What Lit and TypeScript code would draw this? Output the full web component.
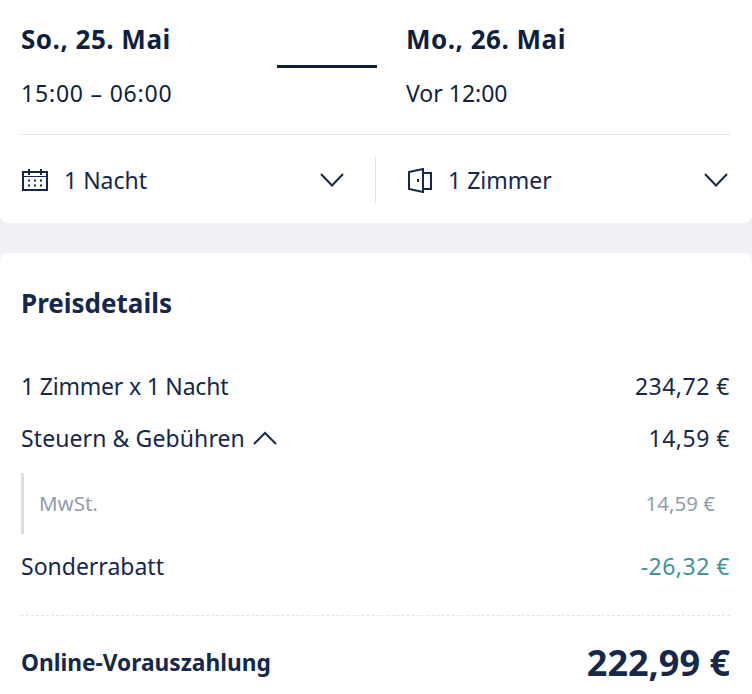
import { LitElement, html, css } from "lit";
import { customElement } from "lit/decorators.js";

@customElement("app-root")
export class AppRoot extends LitElement {
  static styles = css`
    :host { display: block; width: 752px; height: 694px; overflow: hidden; background: #eff1f5; font-family: "Noto Sans", sans-serif; color: #15284b; }
    .top { background: #fff; height: 223px; border-radius: 0 0 8px 8px; padding: 0 22px 0 21px; box-sizing: border-box; display: flex; flex-direction: column; }
    .dates { display: grid; grid-template-columns: 256px 100px 1fr; column-gap: 0; height: 135px; border-bottom: 1px solid #e2e4e8; color: #0e1f3f; }
    .col3 { padding-left: 29px; }
    .date { font-size: 26px; font-weight: 700; line-height: 34px; margin-top: 22px; letter-spacing: 0.5px; }
    .time { font-size: 23px; line-height: 32px; margin-top: 21px; letter-spacing: 0.8px; }
    .v12 { letter-spacing: 0; }
    .line { height: 3px; background: #0e1f3f; width: 100px; margin-top: 65px; }
    .opts { display: flex; align-items: center; height: 88px; padding-top: 2px; box-sizing: border-box; }
    .opt { display: flex; align-items: center; font-size: 23px; }
    .opt.a { width: 323px; box-sizing: border-box; }
    .opt.b { flex: 1; padding-right: 2px; }
    .opt .sp { flex: 1; }
    .ic1 { margin: 0 16px 0 1px; }
    .ic2 { margin: 0 16px 0 0; }
    .sep { width: 1px; height: 46px; background: #e2e4e8; margin: 0 32px 0 31px; }
    .card { margin-top: 30px; background: #fff; height: 441px; border-radius: 8px 8px 0 0; padding: 0 22px 0 21px; box-sizing: border-box; }
    h2 { margin: 0; font-size: 26px; font-weight: 700; line-height: 34px; padding-top: 33px; }
    .row { display: flex; justify-content: space-between; align-items: center; font-size: 23px; line-height: 32px; }
    .amt { letter-spacing: 0.5px; }
    .r1 { margin-top: 50px; }
    .tight { letter-spacing: -0.2px; }
    .wide { letter-spacing: 0.1px; }
    .r2 { margin-top: 20px; }
    .tax { margin-top: 19px; height: 61px; border-left: 3px solid #d9dde6; padding: 0 15px 2px 15px; box-sizing: border-box; display: flex; justify-content: space-between; align-items: center; font-size: 20.5px; color: #939cae; }
    .r3 { margin-top: 16px; }
    .teal { color: #3d9599; }
    .lab { display: flex; align-items: center; gap: 8px; }
    .total { margin-top: 33px; border-top: 1px dashed #e2e4e8; display: flex; justify-content: space-between; align-items: center; height: 93px; }
    .total b { font-size: 22.7px; font-weight: 700; }
    .total strong { font-size: 36px; font-weight: 700; }
  `;
  chev() {
    return html`<svg width="24" height="14" viewBox="0 0 24 14" fill="none" stroke="#15284b" stroke-width="2"><path d="M1 1l11 11.500L23 1"/></svg>`;
  }
  render() {
    return html`
      <div class="top">
        <div class="dates">
          <div><div class="date">So., 25. Mai</div><div class="time">15:00 – 06:00</div></div>
          <div><div class="line"></div></div>
          <div class="col3"><div class="date">Mo., 26. Mai</div><div class="time v12">Vor 12:00</div></div>
        </div>
        <div class="opts">
          <div class="opt a">
            <svg class="ic1" width="26" height="23" viewBox="0 0 26 23" fill="none" stroke="#15284b"><rect x="1" y="3" width="24" height="18" stroke-width="2"/><path d="M1 7.500h24" stroke-width="1"/><path d="M7 0v6M19 0v6" stroke-width="2"/><path d="M6 11.500h2M12 11.500h2M18 11.500h2M6 16.500h2M12 16.500h2M18 16.500h2" stroke-width="2"/></svg>
            <span>1 Nacht</span><span class="sp"></span>${this.chev()}
          </div>
          <div class="sep"></div>
          <div class="opt b">
            <svg class="ic2" width="24" height="25" viewBox="0 0 24 25" fill="none" stroke="#15284b" stroke-width="2"><path d="M1 4l14-3v23L1 21z"/><path d="M15 5h8v16h-8"/><path d="M10 11v3"/></svg>
            <span>1 Zimmer</span><span class="sp"></span>${this.chev()}
          </div>
        </div>
      </div>
      <div class="card">
        <h2>Preisdetails</h2>
        <div class="row r1"><span class="tight">1 Zimmer x 1 Nacht</span><span class="amt">234,72 €</span></div>
        <div class="row r2"><span class="lab wide">Steuern &amp; Gebühren <svg width="24" height="14" viewBox="0 0 24 14" fill="none" stroke="#15284b" stroke-width="2"><path d="M1 13L12 2l11 11"/></svg></span><span class="amt">14,59 €</span></div>
        <div class="tax"><span>MwSt.</span><span>14,59 €</span></div>
        <div class="row r3"><span>Sonderrabatt</span><span class="teal amt">-26,32 €</span></div>
        <div class="total"><b>Online-Vorauszahlung</b><strong>222,99 €</strong></div>
      </div>
    `;
  }
}
